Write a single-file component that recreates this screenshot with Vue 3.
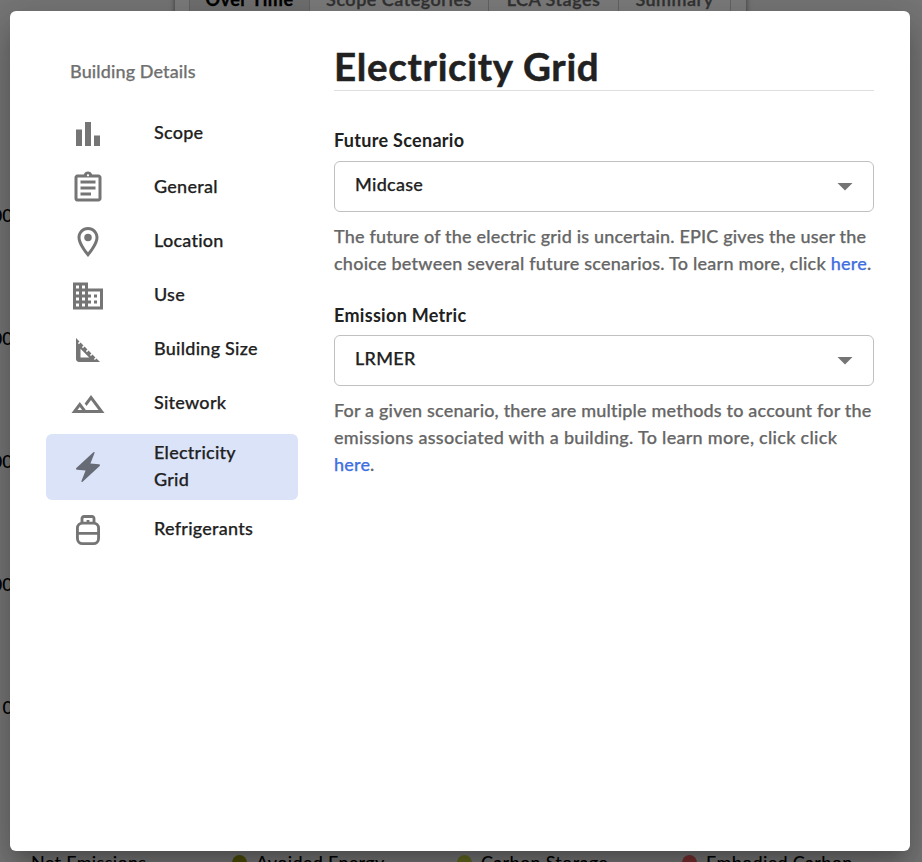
<script setup>
const items = [
  { label: 'Scope', icon: ['M4 9h4v11H4zm12 4h4v7h-4zm-6-9h4v16h-4z'] },
  { label: 'General', icon: ['M7 15h7v2H7zm0-4h10v2H7zm0-4h10v2H7zm12-4h-4.18C14.4 1.84 13.3 1 12 1c-1.3 0-2.4.84-2.82 2H5c-.14 0-.27.01-.4.04-.39.08-.74.28-1.01.55-.18.18-.33.4-.43.64-.1.23-.16.49-.16.77v14c0 .27.06.54.16.78s.25.45.43.64c.27.27.62.47 1.01.55.13.02.26.03.4.03h14c1.1 0 2-.9 2-2V5c0-1.1-.9-2-2-2m-7-.25c.41 0 .75.34.75.75s-.34.75-.75.75-.75-.34-.75-.75.34-.75.75-.75M19 19H5V5h14z'] },
  { label: 'Location', icon: ['M12 2C8.13 2 5 5.13 5 9c0 5.25 7 13 7 13s7-7.75 7-13c0-3.87-3.13-7-7-7M7 9c0-2.76 2.24-5 5-5s5 2.24 5 5c0 2.88-2.88 7.19-5 9.88C9.92 16.21 7 11.85 7 9', 'M9.5 9a2.5 2.5 0 1 0 5 0a2.5 2.5 0 1 0-5 0'] },
  { label: 'Use', icon: ['M12 7V3H2v18h20V7zM6 19H4v-2h2zm0-4H4v-2h2zm0-4H4V9h2zm0-4H4V5h2zm4 12H8v-2h2zm0-4H8v-2h2zm0-4H8V9h2zm0-4H8V5h2zm10 12h-8v-2h2v-2h-2v-2h2v-2h-2V9h8zm-2-8h-2v2h2zm0 4h-2v2h2z'] },
  { label: 'Building Size', icon: ['m17.66 17.66-1.06 1.06-.71-.71 1.06-1.06-1.94-1.94-1.06 1.06-.71-.71 1.06-1.06-1.94-1.94-1.06 1.06-.71-.71 1.06-1.06L9.7 9.7l-1.06 1.06-.71-.71 1.06-1.06-1.94-1.94-1.06 1.06-.71-.71 1.06-1.06L4 4v14c0 1.1.9 2 2 2h14zM7 17v-5.76L12.76 17z'] },
  { label: 'Sitework', icon: ['m14 6-4.22 5.63 1.25 1.67L14 9.33 19 16h-8.46l-4.01-5.37L1 18h22zM5 16l1.52-2.03L8.04 16z'] },
  { label: 'Electricity Grid', active: true, icon: ['M15.6 2.1Q16.7 1.6 16.3 2.8L13.6 9.6L19.3 10.2Q20.6 10.5 19.6 11.5L8.4 21.9Q7.3 22.4 7.7 21.2L10.4 14.4L4.7 13.8Q3.4 13.5 4.4 12.5Z'] },
  { label: 'Refrigerants', tank: true, icon: [] },
]

const fields = [
  {
    label: 'Future Scenario', value: 'Midcase', cls: 'first',
    lines: ['The future of the electric grid is uncertain. EPIC gives the user the', 'choice between several future scenarios. To learn more, click '],
  },
  {
    label: 'Emission Metric', value: 'LRMER', cls: 'second',
    lines: ['For a given scenario, there are multiple methods to account for the', 'emissions associated with a building. To learn more, click click', ''],
  },
]
const tabs = ['Over Time', 'Scope Categories', 'LCA Stages', 'Summary']
const legend = [
  { label: 'Net Emissions', tone: 'none' },
  { label: 'Avoided Energy', tone: 'olive' },
  { label: 'Carbon Storage', tone: 'lime' },
  { label: 'Embodied Carbon', tone: 'red' },
]
</script>

<template>
  <div class="page">
    <div class="tabs">
      <span v-for="(t, i) in tabs" :key="t" class="tab" :class="['tab-' + i]">{{ t }}</span>
    </div>
    <div class="axis">
      <span v-for="n in 5" :key="n" class="tick">{{ n < 5 ? '00' : '0' }}</span>
    </div>
    <div class="legend">
      <span v-for="l in legend" :key="l.label" class="entry"><i class="dot" :class="l.tone"></i>{{ l.label }}</span>
    </div>
    <div class="scrim">
      <section class="dialog">
        <nav class="side">
          <h2 class="side-title">Building Details</h2>
          <a v-for="it in items" :key="it.label" class="item" :class="{ active: it.active }">
            <svg class="icon" viewBox="0 0 24 24">
              <path v-for="d in it.icon" :key="d" :d="d" fill-rule="evenodd" />
              <g v-if="it.tank" fill="none" stroke="currentColor" stroke-width="1.9">
                <rect x="4.95" y="7.4" width="14.1" height="13.7" rx="3.4" />
                <path d="M5 14.2h14M8 7.4V4.4a1.4 1.4 0 0 1 1.4-1.4h5.2a1.4 1.4 0 0 1 1.4 1.4v3M12 5.4v2" />
              </g>
            </svg>
            <span class="label">{{ it.label }}</span>
          </a>
        </nav>
        <main class="content">
          <h1>Electricity Grid</h1>
          <div v-for="f in fields" :key="f.label" class="field" :class="f.cls">
            <label>{{ f.label }}</label>
            <div class="select">
              <span class="value">{{ f.value }}</span>
              <svg class="arrow" viewBox="0 0 24 24"><path d="m7 10 5 5 5-5z" /></svg>
            </div>
            <p class="help">
              <span v-for="(l, i) in f.lines" :key="i" class="line" :class="'l' + i">{{ l }}<template v-if="i === f.lines.length - 1"><a>here</a>.</template></span>
            </p>
          </div>
        </main>
      </section>
    </div>
  </div>
</template>

<style>
body { margin: 0; overflow: hidden; }
</style>

<style scoped>
* { box-sizing: border-box; }
.page {
  position: relative;
  width: 922px;
  height: 862px;
  overflow: hidden;
  background: #ececec;
  color: #212121;
  font-family: Lato, "Open Sans", sans-serif;
  font-size: 18px;
  font-weight: 500;
  font-variant-ligatures: none;
  letter-spacing: .18px;
}
.tabs {
  position: absolute;
  left: 175px;
  top: -20px;
  display: flex;
  width: 571px;
  height: 60px;
  padding-left: 14px;
  background: #f8f8f8;
  box-shadow: 0 1px 5px rgba(0, 0, 0, .5);
}
.tab {
  height: 60px;
  padding-top: 7px;
  border-right: 1px solid #c8c8c8;
  color: #666;
  font-weight: 600;
  letter-spacing: .5px;
  line-height: 24px;
  text-align: center;
  white-space: nowrap;
  -webkit-text-stroke: .3px;
}
.tab-0 { width: 121px; background: #e0e0e0; border-left: 1px solid #c8c8c8; color: #000; font-weight: 700; }
.tab-1 { width: 179px; }
.tab-2 { width: 130px; }
.tab-3 { width: 112px; }
.axis {
  position: absolute;
  left: -20px;
  top: 203px;
  display: flex;
  flex-direction: column;
  gap: 99px;
  width: 33px;
  text-align: right;
}
.tick { height: 24px; line-height: 24px; color: #000; }
.legend {
  position: absolute;
  left: 7px;
  top: 850px;
  display: grid;
  grid-template-columns: repeat(4, 225px);
}
.entry { display: flex; align-items: center; gap: 9px; line-height: 24px; color: #000; letter-spacing: .3px; }
.dot { width: 15px; height: 15px; border-radius: 50%; }
.olive { background: #9a9a10; }
.lime { background: #c5d040; }
.red { background: #f06060; }
.scrim {
  position: absolute;
  inset: 0;
  padding: 11px 12px 11px 10px;
  background: rgba(0, 0, 0, .5);
}
.dialog {
  display: flex;
  width: 900px;
  height: 840px;
  padding: 36px;
  border-radius: 6px;
  background: #fff;
  box-shadow: 0 11px 15px -7px rgba(0, 0, 0, .2), 0 24px 38px 3px rgba(0, 0, 0, .14), 0 9px 46px 8px rgba(0, 0, 0, .12);
}
.side { display: flex; flex-direction: column; gap: 6px; width: 252px; }
.side-title {
  height: 57px;
  margin: 0;
  padding: 11px 24px 0;
  color: #707070;
  font-size: 18px;
  font-weight: 500;
  letter-spacing: .12px;
  line-height: 27px;
  -webkit-text-stroke: .25px;
}
.item {
  display: flex;
  align-items: center;
  min-height: 48px;
  padding: 6px 24px;
  border-radius: 6px;
}
.item.active { min-height: 66px; padding: 4px 24px 6px; background: #dbe3f8; }
.icon { flex: none; width: 36px; height: 36px; margin-right: 48px; color: #757575; fill: currentColor; }
.active .icon { margin-top: 2px; color: #666b75; }
.label { width: 110px; line-height: 27px; margin-top: -4px; letter-spacing: .26px; -webkit-text-stroke: .25px; }
.active .label { margin-top: 0; }
.content { width: 540px; margin-left: 36px; }
h1 {
  height: 44px;
  margin: 0;
  border-bottom: 1px solid #dedede;
  font-size: 38.5px;
  font-weight: 700;
  letter-spacing: .7px;
  line-height: 38px;
  -webkit-text-stroke: .5px;
}
.field { display: flex; flex-direction: column; }
.first { margin-top: 36px; }
.second { margin-top: 24px; }
label { height: 34px; font-weight: 700; letter-spacing: .3px; line-height: 26px; }
.second label { height: 33px; }
.select {
  display: flex;
  align-items: center;
  justify-content: space-between;
  height: 51px;
  padding: 0 10px 0 20px;
  border: 1px solid #c0c0c0;
  border-radius: 6px;
}
.value { margin-top: -5px; letter-spacing: .3px; -webkit-text-stroke: .25px; }
.arrow { width: 36px; height: 36px; margin-top: -2px; fill: #757575; }
.help { margin: 11px 0 0; color: #666; line-height: 27px; -webkit-text-stroke: .25px; }
.first .help { margin-bottom: 1px; }
.line { display: block; white-space: nowrap; }
.l1 { letter-spacing: .24px; }
.second .l1 { letter-spacing: .29px; }
.help a { color: #4070e0; }
</style>
